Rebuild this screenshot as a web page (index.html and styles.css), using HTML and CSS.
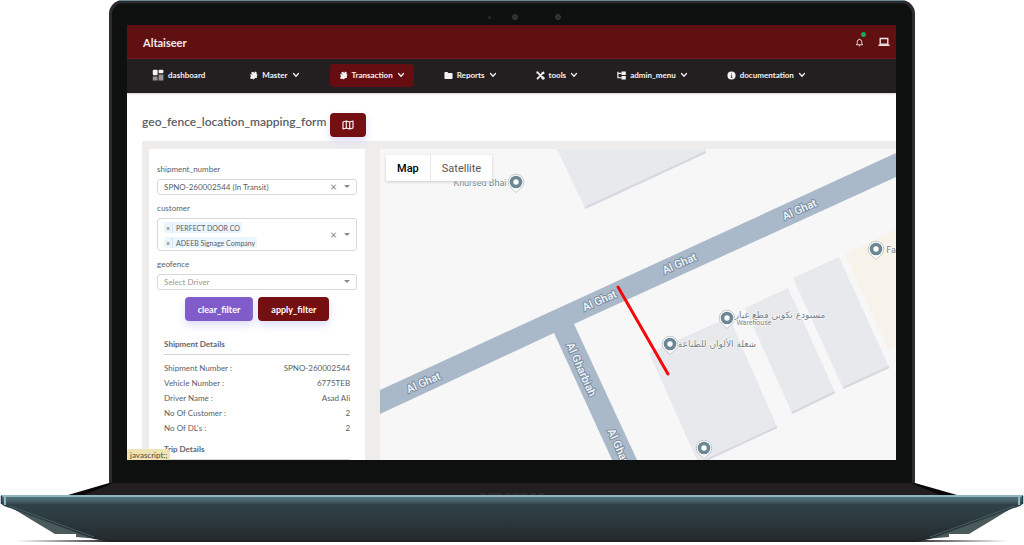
FILE: index.html
```html
<!DOCTYPE html>
<html lang="en">
<head>
  <meta charset="UTF-8">
  <meta name="viewport" content="width=device-width, initial-scale=1.0">
  <title>Altaiseer - geo_fence_location_mapping_form</title>
  <link rel="stylesheet" href="styles.css">
</head>
<body>

  <!-- shared icons -->
  <svg class="sprite" aria-hidden="true">
    <symbol id="chevron" viewBox="0 0 8 8"><path d="M1.500 2.500 4 5.200 6.500 2.500" fill="none" stroke="currentColor" stroke-width="1.300" stroke-linecap="round"/></symbol>
    <symbol id="grid" viewBox="0 0 12 12"><rect x=".8" y=".8" width="4.800" height="5.400" rx="1" fill="currentColor"/><rect x="6.600" y=".8" width="4.800" height="3.400" rx="1" fill="currentColor"/><path d="M.8 7.600h4.800v3.800H.8zM6.600 5.600h4.800v5.800H6.600z" fill="currentColor" opacity=".55"/></symbol>
    <symbol id="puzzle" viewBox="0 0 10 10"><path d="M.8 4 3 3.500 2.600 1.500 4.800.8l.8 1.300L7 .6l1.700 1-.5 1.700 1.400 1-1 1.500.3 1.900-2.200.2L5.500 9.400 3.800 8.500 1.800 9 1.300 7 2.400 5.800z" fill="currentColor"/><path d="M3.200 3.600 4.200 4.500" stroke="#3a2022" stroke-width=".5"/></symbol>
    <symbol id="folder" viewBox="0 0 10 10"><path d="M.5 2q0-.9.900-.9h2.400l1 1h3.800q.9 0 .9.900v5q0 .9-.9.900H1.400q-.9 0-.9-.9z" fill="currentColor"/></symbol>
    <symbol id="wrench" viewBox="0 0 10 10"><path d="M1.300 1.300 8.500 8.500M8.300 1.500 1.700 8.500" stroke="currentColor" stroke-width="1.900" stroke-linecap="round"/><path d="M6 1.200 8 3l1.500-.2M.8 3 3 .8M6 7.800 7.800 6l1.700 1.700-1.800 1.800z" fill="currentColor" stroke="currentColor" stroke-width=".7"/></symbol>
    <symbol id="tree" viewBox="0 0 10 10"><path d="M1 .8v6.700h4M1 2.600h4" fill="none" stroke="currentColor" stroke-width="1.300"/><path d="M5 .6h4.800v3.800H5zM5 5.600h4.800v3.800H5z" fill="currentColor"/></symbol>
    <symbol id="info" viewBox="0 0 10 10"><circle cx="5" cy="5" r="4.500" fill="currentColor"/><path d="M4.200 4.500H5.100V7.200M4.100 7.200h2M5 2.600v.9" fill="none" stroke="#231f20" stroke-width=".8"/></symbol>
    <symbol id="pin" viewBox="-9 -9 18 20"><path d="M0 10.400 -5.200 5.800A7.800 7.800 0 1 1 5.200 5.800z" fill="#fff" stroke="#b3bdc3" stroke-width=".8"/><circle r="6.300" fill="#6d8693"/><circle r="2.700" fill="#fff"/></symbol>
  </svg>

  <div class="laptop">

    <div class="lid">
      <div class="camera"><i class="mic"></i><i class="lens"></i><i class="lens"></i></div>

      <div class="screen">

        <header class="topbar">
          <span class="brand">Altaiseer</span>
          <button class="icon-btn bell" aria-label="Notifications">
            <svg viewBox="0 0 10 10"><path d="M1.500 7.500h7L7.500 6V4.200a2.500 2.500 0 0 0-5 0V6zM4.200 8.700h1.600M5 .8v.8" fill="none" stroke="currentColor" stroke-width="1"/></svg>
          </button>
          <button class="icon-btn" aria-label="Screen">
            <svg class="wide" viewBox="0 0 12 10"><path d="M2.200 7.200V1.500h7.600v5.700z" fill="none" stroke="currentColor" stroke-width="1.300"/><path d="M.5 7.500h11v1.500H.5z" fill="currentColor"/></svg>
          </button>
        </header>

        <nav class="menu">
          <a class="home" href="#"><svg><use href="#grid"/></svg>dashboard</a>
          <a href="#"><svg><use href="#puzzle"/></svg>Master<svg class="arrow"><use href="#chevron"/></svg></a>
          <a class="active" href="#"><svg><use href="#puzzle"/></svg>Transaction<svg class="arrow"><use href="#chevron"/></svg></a>
          <a href="#"><svg><use href="#folder"/></svg>Reports<svg class="arrow"><use href="#chevron"/></svg></a>
          <a href="#"><svg><use href="#wrench"/></svg>tools<svg class="arrow"><use href="#chevron"/></svg></a>
          <a href="#"><svg><use href="#tree"/></svg>admin_menu<svg class="arrow"><use href="#chevron"/></svg></a>
          <a href="#"><svg><use href="#info"/></svg>documentation<svg class="arrow"><use href="#chevron"/></svg></a>
        </nav>

        <div class="page-title">
          <h1>geo_fence_location_mapping_form</h1>
          <button class="btn map-btn" aria-label="Open map">
            <svg viewBox="0 0 12 10"><path d="M1 2 4.300 1l3.400 1L11 1v7l-3.300 1-3.400-1L1 9zM4.300 1v7M7.700 2v7" fill="none" stroke="currentColor" stroke-width="1.100" stroke-linejoin="round"/></svg>
          </button>
        </div>

        <main class="content">

          <section class="card">
            <label for="shipment">shipment_number</label>
            <div class="field">
              <select id="shipment"><option>SPNO-260002544 (In Transit)</option></select>
              <button class="clear" aria-label="Clear shipment">×</button>
            </div>

            <label for="customer">customer</label>
            <div class="field tags">
              <span class="tag"><button aria-label="Remove PERFECT DOOR CO">×</button>PERFECT DOOR CO</span>
              <span class="tag"><button aria-label="Remove ADEEB Signage Company">×</button>ADEEB Signage Company</span>
              <input id="customer" type="text">
              <button class="clear" aria-label="Clear customers">×</button>
            </div>

            <label for="geofence">geofence</label>
            <div class="field">
              <select id="geofence" class="empty"><option>Select Driver</option></select>
            </div>

            <div class="actions">
              <button class="btn purple">clear_filter</button>
              <button class="btn">apply_filter</button>
            </div>

            <div class="details">
              <h2>Shipment Details</h2>
              <dl>
                <div><dt>Shipment Number :</dt><dd>SPNO-260002544</dd></div>
                <div><dt>Vehicle Number :</dt><dd>6775TEB</dd></div>
                <div><dt>Driver Name :</dt><dd>Asad Ali</dd></div>
                <div><dt>No Of Customer :</dt><dd>2</dd></div>
                <div><dt>No Of DL's :</dt><dd>2</dd></div>
              </dl>
              <h2>Trip Details</h2>
            </div>
          </section>

          <section class="map">
            <svg class="map-canvas" viewBox="380 149 516 311" preserveAspectRatio="xMinYMin slice">
              <!-- land and buildings -->
              <path d="M845 254 896 229V346L888 349z" fill="#f8f3ea"/>
              <g fill="#e8e9ed">
                <path d="M557 149 585 208 706 152V149z"/>
                <path d="M649 353 729 317 777 427 704 460H697z"/>
                <path d="M745 308 788 288 835 392 792 413z"/>
                <path d="M793 278 839 257 889 367 843 388z"/>
              </g>
              <path d="M585 208 706 152M777 427 704 461M835 392 792 413M889 367 843 388" fill="none" stroke="#d6d8e0" stroke-width="2"/>

              <!-- roads -->
              <path d="M380 390 896 153V177L574 324 638 462H613L554 333 380 414z" fill="#aab9c9"/>
              <g class="road">
                <text transform="translate(425 386) rotate(-24)">Al Ghat</text>
                <text transform="translate(601 304) rotate(-24)">Al Ghat</text>
                <text transform="translate(681 267) rotate(-24)">Al Ghat</text>
                <text transform="translate(801 213) rotate(-24)">Al Ghat</text>
                <text transform="translate(578 371) rotate(66)">Al Gharbiah</text>
                <text transform="translate(619 457) rotate(66)">Al Gharbiah</text>
              </g>

              <path d="M618 287 668 374" stroke="#f5080c" stroke-width="3" stroke-linecap="round"/>

              <!-- places -->
              <use href="#pin" x="507" y="173" width="18" height="20"/>
              <use href="#pin" x="718" y="309" width="18" height="20"/>
              <use href="#pin" x="661" y="335" width="18" height="20"/>
              <use href="#pin" x="695" y="439" width="18" height="20"/>
              <use href="#pin" x="867" y="240" width="18" height="20"/>
              <g class="place">
                <text x="480" y="186">Khursed Bhai</text>
                <text class="arabic" x="780" y="318">مستودع تكوين قطع غيار</text>
                <text class="small" x="754" y="325">Warehouse</text>
                <text class="arabic" x="717" y="347">شعلة الألوان للطباعة</text>
                <text x="891" y="253">Fa</text>
              </g>
            </svg>
            <div class="map-type">
              <button class="on">Map</button>
              <button>Satellite</button>
            </div>
          </section>

        </main>

        <div class="status">javascript:;</div>
      </div>
    </div>

    <svg class="base" viewBox="0 483 1024 62" preserveAspectRatio="none" aria-hidden="true">
      <defs>
        <linearGradient id="metal" x1="0" y1="0" x2="0" y2="1">
          <stop offset="0" stop-color="#567880"/>
          <stop offset=".13" stop-color="#486168"/>
          <stop offset=".2" stop-color="#30424a"/>
          <stop offset=".55" stop-color="#2b393c"/>
          <stop offset="1" stop-color="#23282c"/>
        </linearGradient>
        <linearGradient id="shadow">
          <stop offset="0" stop-color="#222" stop-opacity="0"/>
          <stop offset=".1" stop-color="#222"/>
          <stop offset=".9" stop-color="#222"/>
          <stop offset="1" stop-color="#222" stop-opacity="0"/>
        </linearGradient>
      </defs>
      <path d="M109 483H915L957 495H68z" fill="#080808"/>
      <path d="M113 483H911L940 495H84z" fill="#231f20"/>
      <path d="M480 494h64" stroke="#3c393a" stroke-dasharray="6 2 14 3"/>
      <path d="M7 505 55 534H76V537L110 540H914L949 537V534H969L1017 505z" fill="#4a5a5b"/>
      <path d="M1 495H1023V503Q1022 506 1014 508L930 539 915 542H110L94 539 10 508Q2 506 1 503z" fill="url(#metal)"/>
      <path d="M10 506 94 537M1014 506 930 537" stroke="#445e65" stroke-width="1"/>
      <path d="M2 496H1022" stroke="#91b5be" stroke-width="2"/>
      <path d="M5 497v8M1019 497v8" stroke="#8fb9c1" stroke-width="2"/>
      <path d="M1.500 496v8M1022.500 496v8" stroke="#1f3b43" stroke-width="1.500"/>
      <rect x="15" y="540" width="994" height="2" fill="url(#shadow)"/>
    </svg>

  </div>

</body>
</html>
```
FILE: styles.css
```css
* {
  box-sizing: border-box;
}

body {
  margin: 0;
  background: #fff;
  font-family: Lato, sans-serif;
  font-size: 8px;
  color: #5b5e65;
}

button,
input,
select {
  font: inherit;
  color: inherit;
  margin: 0;
  padding: 0;
  border: none;
  background: none;
}

button {
  cursor: pointer;
}

.sprite {
  position: absolute;
  width: 0;
  height: 0;
}

/* laptop */

.lid {
  position: relative;
  width: 78.7%;
  margin: 0 auto;
  padding: 22px 16px 23px 15px;
  background: #0e0f0f;
  border: 3px solid #2a2c30;
  border-bottom: none;
  border-radius: 14px 14px 0 0;
  box-shadow: inset 0 1px 0 #17191a;
}

/* thin metal edge along the top of the lid */
.lid::before {
  content: "";
  position: absolute;
  top: -3px;
  left: 8px;
  right: 8px;
  height: 1px;
  background: #6d8990;
}

.camera {
  position: absolute;
  top: 11px;
  left: 24px;
  right: 0;
  display: flex;
  justify-content: center;
  align-items: center;
  gap: 21px;
}

.camera i {
  border-radius: 50%;
  background: #2c2d2d;
}

.mic {
  width: 3px;
  height: 3px;
}

.lens {
  width: 6px;
  height: 6px;
  border: 1px solid #3a3b3b;
}

.lens:last-child {
  margin-left: 16px;
}

.screen {
  position: relative;
  overflow: hidden;
  background: #fff;
}

.base {
  display: block;
  width: 100%;
  height: 62px;
}

/* top bar */

.topbar {
  display: flex;
  align-items: center;
  gap: 14px;
  height: 34px;
  padding: 0 6px 0 16px;
  background: #611012;
  color: #f3e9e9;
}

.brand {
  flex: 1;
  font-size: 11px;
  font-weight: 700;
}

.icon-btn {
  position: relative;
  display: flex;
}

.icon-btn svg {
  width: 9px;
  height: 9px;
}

.icon-btn .wide {
  width: 12px;
  height: 10px;
}

.bell::after {
  content: "";
  position: absolute;
  top: -6px;
  right: -2px;
  width: 5px;
  height: 5px;
  border-radius: 50%;
  background: #14a957;
}

/* menu */

.menu {
  display: flex;
  align-items: center;
  gap: 21px;
  height: 34px;
  padding: 0 16px 2px;
  background: #231f20;
  box-shadow: 0 1px 2px #d8d0d0;
}

.menu a {
  display: flex;
  align-items: center;
  gap: 4px;
  height: 23px;
  padding: 0 9px;
  border-radius: 4px;
  color: #f4f2f2;
  font-weight: 700;
  text-decoration: none;
}

.menu svg {
  width: 9px;
  height: 9px;
}

.menu .arrow {
  width: 8px;
  height: 8px;
}

.menu .home {
  padding-right: 14px;
}

.menu .home svg {
  width: 12px;
  height: 12px;
}

.menu .active {
  background: #650d10;
}

/* page */

.page-title {
  display: flex;
  align-items: flex-start;
  gap: 4px;
  height: 48px;
  padding: 20px 15px 0;
}

.page-title h1 {
  margin: 0;
  font-size: 12px;
  font-weight: 600;
  line-height: 18px;
  color: #5b5e65;
}

.btn {
  height: 24px;
  padding: 0 13px;
  border-radius: 4px;
  background: #740f12;
  color: #fff;
  font-size: 9px;
  font-weight: 700;
  box-shadow: 0 4px 8px #dcdcfa;
}

.btn.purple {
  background: #7f5cc9;
}

.map-btn {
  display: flex;
  align-items: center;
  padding: 0 12px;
}

.map-btn svg {
  width: 12px;
  height: 10px;
}

.content {
  display: flex;
  gap: 15px;
  margin-left: 15px;
  padding: 8px 0 0 7px;
  background: #efecec;
}

.card {
  flex: 0 0 216px;
  padding: 13px 8px 0;
  background: #fff;
}

.card label {
  display: block;
  height: 14px;
  margin-bottom: 3px;
  line-height: 14px;
}

.field {
  position: relative;
  height: 16px;
  margin-bottom: 6px;
  border: 1px solid #d9d9dc;
  border-radius: 3px;
}

.field select {
  display: block;
  width: 100%;
  height: 14px;
  padding-left: 6px;
  appearance: none;
}

.field .empty {
  color: #999;
}

.field::after {
  content: "";
  position: absolute;
  right: 6px;
  top: 50%;
  margin-top: -2px;
  border: 3px solid transparent;
  border-top-color: #888;
  border-bottom: none;
  pointer-events: none;
}

.clear {
  position: absolute;
  right: 19px;
  top: 0;
  bottom: 0;
  font-size: 12px;
  line-height: 12px;
  color: #888;
}

.tags {
  display: flex;
  flex-direction: column;
  align-items: flex-start;
  gap: 4px;
  height: 33px;
  padding: 3px 6px;
}

.tags input {
  position: absolute;
  right: 32px;
  bottom: 2px;
  width: 50px;
  height: 12px;
}

.tag {
  display: flex;
  align-items: center;
  height: 11px;
  padding-right: 2px;
  border-radius: 2px;
  background: #ebf5ff;
  font-size: 7px;
}

.tag button {
  width: 9px;
  height: 11px;
  margin-right: 3px;
  border-right: 1px solid #d5e6f7;
  line-height: 10px;
}

.actions {
  display: flex;
  justify-content: center;
  gap: 5px;
  padding-top: 1px;
}

.details {
  padding: 16px 7px 0;
}

.details h2 {
  height: 18px;
  margin: 0;
  border-bottom: 1px solid #d5d5d9;
  font-size: 8px;
  font-weight: 700;
  line-height: 14px;
  color: #62656e;
}

.details dl {
  margin: 6px 0;
}

.details dl div {
  display: flex;
  justify-content: space-between;
  height: 15px;
  line-height: 15px;
}

.details dd {
  margin: 0;
}

/* map */

.map {
  position: relative;
  flex: 1;
  overflow: hidden;
  background: #f7f7f7;
}

.map-canvas {
  position: absolute;
  width: 100%;
  height: 100%;
}

.map-canvas text {
  text-anchor: middle;
  font-family: Roboto, sans-serif;
}

.road text {
  font-size: 11px;
  font-weight: 500;
  fill: #f4f6f8;
  stroke: #7c8fa4;
  stroke-width: 2px;
  paint-order: stroke;
}

.place text {
  font-size: 9px;
  fill: #75828a;
  stroke: #fff;
  stroke-width: 1px;
  paint-order: stroke;
}

.place .small {
  font-size: 7px;
}

.place .arabic {
  font-family: "DejaVu Sans", sans-serif;
}

.map-type {
  position: absolute;
  top: 6px;
  left: 6px;
  display: flex;
  height: 26px;
  background: #fff;
  box-shadow: 0 1px 3px #ccc;
  font-family: Roboto, sans-serif;
  font-size: 11px;
  color: #565656;
}

.map-type button {
  padding: 0 11px;
}

.map-type .on {
  border-right: 1px solid #e8e8e8;
  color: #000;
  font-weight: 500;
}

.status {
  position: absolute;
  left: 0;
  bottom: 0;
  height: 11px;
  padding: 0 3px;
  border-radius: 0 3px 0 0;
  background: #efe2b3;
  line-height: 12px;
  color: #4d4a3a;
}
```
